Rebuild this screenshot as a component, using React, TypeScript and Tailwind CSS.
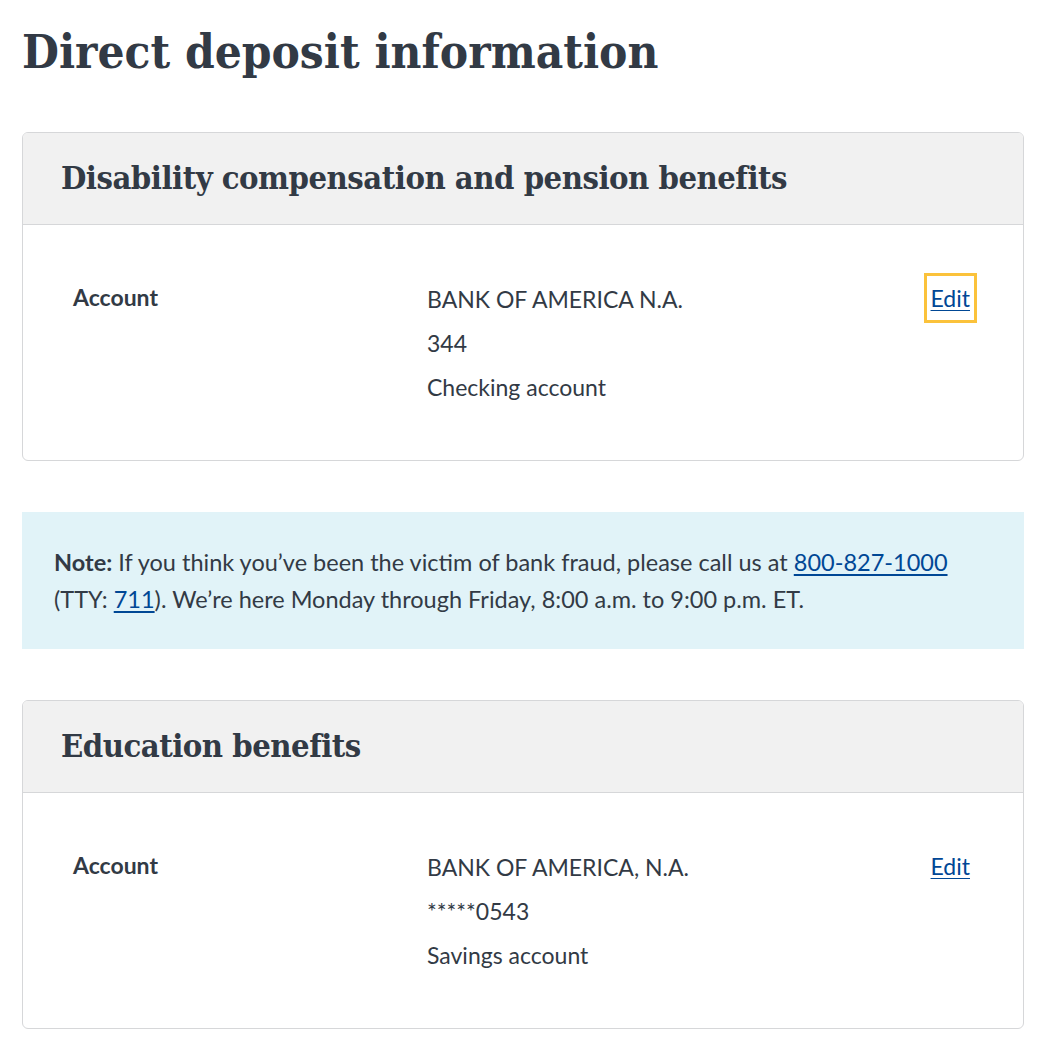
const serif = "font-['DejaVu_Serif_Condensed','DejaVu_Serif',serif]";

const Edit = ({ focused }: { focused?: boolean }) => (
  <a
    href="#"
    className={
      "text-[23px] leading-[30px] text-[#004795] underline underline-offset-[3px] decoration-1 px-[4px] py-[8px] " +
      (focused ? "outline-[3px] outline-solid outline-[#fbc23b]" : "")
    }
  >
    Edit
  </a>
);

const Card = ({
  title,
  lines,
  focused,
}: {
  title: string;
  lines: string[];
  focused?: boolean;
}) => (
  <section className="border border-[#d6d7d9] rounded-[6px] overflow-hidden">
    <div className="bg-[#f1f1f1] border-b border-[#d6d7d9] h-[92px] flex items-center px-[38px]">
      <h2 className={serif + " text-[32.5px] font-bold text-[#323a45] tracking-[-0.5px]"}>
        {title}
      </h2>
    </div>
    <div className="flex pl-[50px] pr-[49px] pt-[52px] pb-[51px]">
      <div className="w-[354px] text-[23px] leading-[40px] font-bold text-[#323a45]">
        Account
      </div>
      <div className="flex-1 text-[23px] leading-[44px] text-[#323a45]">
        {lines.map((l) => (
          <div key={l}>{l}</div>
        ))}
      </div>
      <div className="pt-[6px]">
        <Edit focused={focused} />
      </div>
    </div>
  </section>
);

export default function App() {
  return (
    <main className="px-[22px] pr-[24px] pt-[20px] pb-[24px] bg-white font-['Lato',sans-serif] text-[#323a45]">
      <h1 className={serif + " text-[47.3px] leading-[64px] font-bold text-[#323a45] mb-[48px]"}>
        Direct deposit information
      </h1>
      <Card
        title="Disability compensation and pension benefits"
        lines={["BANK OF AMERICA N.A.", "344", "Checking account"]}
        focused
      />
      <div className="bg-[#e1f3f8] mt-[51px] mb-[51px] px-[32px] pt-[32px] pb-[31px] text-[23.5px] leading-[37px]">
        <p>
          <strong>Note:</strong> If you think you’ve been the victim of bank fraud, please call us at{" "}
          <a href="#" className="text-[#004795] underline underline-offset-[3px]">
            800-827-1000
          </a>
          <br />
          (TTY:{" "}
          <a href="#" className="text-[#004795] underline underline-offset-[3px]">
            711
          </a>
          ). We’re here Monday through Friday, 8:00 a.m. to 9:00 p.m. ET.
        </p>
      </div>
      <Card
        title="Education benefits"
        lines={["BANK OF AMERICA, N.A.", "*****0543", "Savings account"]}
      />
    </main>
  );
}
